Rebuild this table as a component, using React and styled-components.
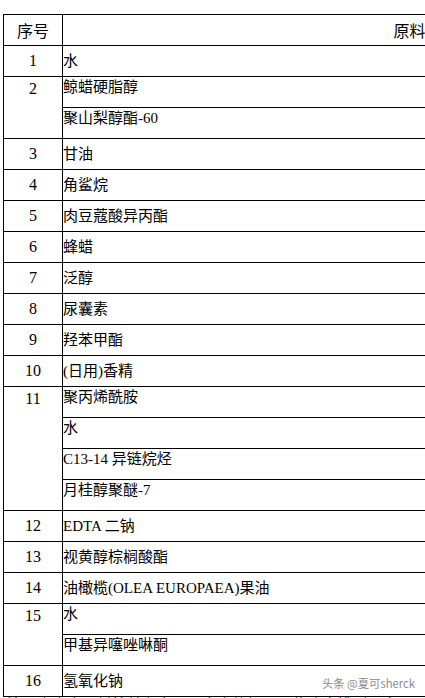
import React from 'react';
import styled, { createGlobalStyle } from 'styled-components';

const GlobalStyle = createGlobalStyle`
  html, body {
    margin  : 0;
    padding : 0;
    overflow: hidden;
    background: #fff;
  }
  body {
    font-family: "Liberation Serif", "Noto Sans CJK SC", serif;
    color      : #000;
  }
`;

const Page = styled.div`
  position  : relative;
  width     : 425px;
  height    : 698px;
  overflow  : hidden;
  padding   : 14px 0 0 3px;
  box-sizing: border-box;
`;

const Table = styled.div`
  display              : grid;
  grid-template-columns: 59px 726px;
  grid-auto-rows       : 31px;
  width                : max-content;
  border-top           : 1px solid #000;
  border-left          : 1px solid #000;
`;

const Cell = styled.div`
  box-sizing   : border-box;
  border-right : 1px solid #000;
  border-bottom: 1px solid #000;
  display      : flex;
  font-size    : 15px;
  line-height  : 18px;
  white-space  : nowrap;
`;

const HeadCell = styled(Cell)`
  align-items    : center;
  justify-content: center;
  font-family    : "Noto Sans CJK SC", sans-serif;
  font-size      : 16px;
`;

const NumCell = styled(Cell)`
  grid-column    : 1;
  grid-row       : span ${(p) => p.$span};
  justify-content: center;
  align-items    : ${(p) => (p.$span > 1 ? 'flex-start' : 'center')};
  padding-top    : ${(p) => (p.$span > 1 ? '3px' : '0')};
  font-size      : 16px;
`;

const NameCell = styled(Cell)`
  grid-column : 2;
  align-items : ${(p) => (p.$sub ? 'flex-start' : 'center')};
  padding-top : ${(p) => (p.$sub ? '1px' : '0')};
`;

const Note = styled.p`
  margin      : 1px 0 0;
  font-size   : 15px;
  line-height : 15px;
  white-space : nowrap;
  padding-left: 4px;
`;

const Watermark = styled.span`
  position   : absolute;
  left       : 322px;
  top        : 675px;
  font-family: "Noto Sans CJK SC", sans-serif;
  font-size  : 11.3px;
  color      : #8c8c8c;
  text-shadow: 0 0 2px #fff, 0 0 1px #fff;
  white-space: nowrap;
`;

const rows = [
  ['1', ['水']],
  ['2', ['鲸蜡硬脂醇', '聚山梨醇酯-60']],
  ['3', ['甘油']],
  ['4', ['角鲨烷']],
  ['5', ['肉豆蔻酸异丙酯']],
  ['6', ['蜂蜡']],
  ['7', ['泛醇']],
  ['8', ['尿囊素']],
  ['9', ['羟苯甲酯']],
  ['10', ['(日用)香精']],
  ['11', ['聚丙烯酰胺', '水', 'C13-14 异链烷烃', '月桂醇聚醚-7']],
  ['12', ['EDTA 二钠']],
  ['13', ['视黄醇棕榈酸酯']],
  ['14', ['油橄榄(OLEA EUROPAEA)果油']],
  ['15', ['水', '甲基异噻唑啉酮']],
  ['16', ['氢氧化钠']],
];

const App = () => (
  <Page>
    <GlobalStyle />
    <Table>
      <HeadCell>序号</HeadCell>
      <HeadCell>原料名称</HeadCell>
      {rows.map(([num, names]) => (
        <React.Fragment key={num}>
          <NumCell $span={names.length}>{num}</NumCell>
          {names.map((name, i) => (
            <NameCell key={i} $sub={names.length > 1}>{name}</NameCell>
          ))}
        </React.Fragment>
      ))}
    </Table>
    <Note>注：本表中原料按其在产品配方中的加入量依降序排列，含量不超过百分之一的原料除外。</Note>
    <Watermark>头条 @夏可sherck</Watermark>
  </Page>
);

export default App;
